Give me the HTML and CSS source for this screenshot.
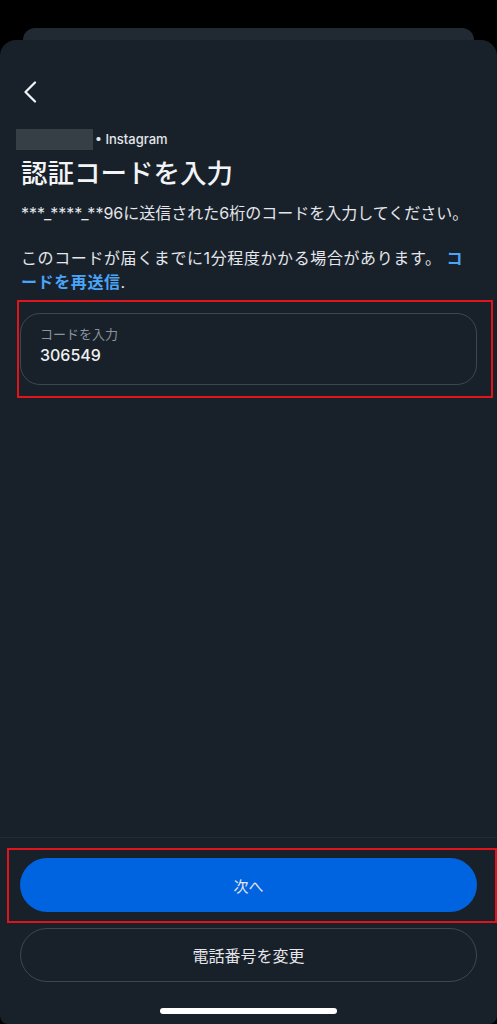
FILE: index.html
```html
<!doctype html>
<html lang="ja">

<head>
    <title>認証コードを入力</title>
    <meta charset="utf-8">
    <link rel="stylesheet" href="styles.css">
</head>

<body>
    <div class="backsheet"></div>
    <div class="sheet">
        <header class="topbar">
            <svg class="back" width="16" height="22" viewBox="0 0 16 22">
                <path d="M13 1.5 L3.5 11 L13 20.5" fill="none" stroke="#f2f4f6" stroke-width="2.2" stroke-linecap="round" stroke-linejoin="round"/>
            </svg>
        </header>

        <section class="content">
            <div class="account">
                <span class="redact"></span>
                <span class="app">• Instagram</span>
            </div>
            <h1>認証コードを入力</h1>
            <p class="info">***_****_**96に送信された6桁のコードを入力してください。</p>
            <p class="info wait">このコードが届くまでに1分程度かかる場合があります。 <a class="link">コードを再送信</a>.</p>

            <div class="field">
                <div class="field-label">コードを入力</div>
                <div class="field-value">306549</div>
            </div>
            <div class="mark mark-field"></div>
        </section>

        <footer class="bottom">
            <button class="btn primary">次へ</button>
            <button class="btn outline">電話番号を変更</button>
            <div class="mark mark-next"></div>
            <div class="home"></div>
        </footer>
    </div>
</body>

</html>
```

FILE: styles.css
```css
html, body {
    margin: 0;
    padding: 0;
}

body {
    width: 497px;
    height: 1024px;
    overflow: hidden;
    background-color: #000;
    font-family: Inter, "Noto Sans CJK JP", sans-serif;
    color: #e4e6eb;
}

.backsheet {
    margin: 28px 23px 0;
    height: 12px;
    background-color: #212a33;
    border-radius: 16px 16px 0 0;
}

.sheet {
    height: 984px;
    background-color: #18212a;
    border-radius: 16px 16px 8px 8px;
    display: flex;
    flex-direction: column;
}

.topbar {
    padding: 41px 0 0 22px;
    height: 24px;
}

.back {
    display: block;
}

.content {
    position: relative;
    flex: 1;
    padding: 23px 20px 0 21px;
}

.account {
    display: flex;
    align-items: center;
    height: 22px;
}

.redact {
    width: 77px;
    height: 21px;
    margin-left: -5px;
    margin-right: 2px;
    background-color: #363e46;
}

.app {
    font-size: 13px;
    font-weight: 500;
    color: #e4e6eb;
}

h1 {
    margin: 4px 0 0;
    font-size: 26.5px;
    line-height: 36px;
    font-weight: 500;
    color: #f2f4f6;
    font-family: "Noto Sans CJK JP", sans-serif;
}

.info {
    margin: 11px 0 0;
    font-size: 16px;
    line-height: 24px;
    color: #e4e6eb;
}

.wait {
    margin-top: 21px;
    letter-spacing: 0.6px;
}

.link {
    color: #4aa4f8;
    font-weight: 600;
}

.field {
    margin-top: 19px;
    margin-left: -1px;
    width: 457px;
    height: 72px;
    box-sizing: border-box;
    border: 1.5px solid #3b4853;
    border-radius: 20px;
    padding: 10px 19px 0;
}

.field-label {
    font-size: 13px;
    line-height: 20px;
    color: #8a949e;
}

.field-value {
    font-size: 16px;
    line-height: 22px;
    font-weight: 500;
    color: #eef0f2;
}

.mark {
    position: absolute;
    border: 2px solid #e0141b;
    box-sizing: border-box;
}

.mark-field {
    left: 17px;
    top: 195px;
    width: 476px;
    height: 98px;
}

.bottom {
    position: relative;
    border-top: 1px solid #222c35;
    padding: 20px 20px 0;
    display: flex;
    flex-direction: column;
    gap: 16px;
    height: 166px;
}

.btn {
    height: 54px;
    width: 457px;
    border-radius: 27px;
    font-family: "Noto Sans CJK JP", sans-serif;
    font-size: 15px;
    color: #e4e6eb;
    box-sizing: border-box;
}

.primary {
    background-color: #0064e0;
    border: none;
}

.outline {
    background-color: transparent;
    border: 1.5px solid #3b4853;
    font-size: 16px;
}

.mark-next {
    left: 7px;
    top: 10px;
    width: 490px;
    height: 75px;
}

.home {
    position: absolute;
    left: 160px;
    bottom: 10px;
    width: 177px;
    height: 6px;
    border-radius: 3px;
    background-color: #fff;
}
```
